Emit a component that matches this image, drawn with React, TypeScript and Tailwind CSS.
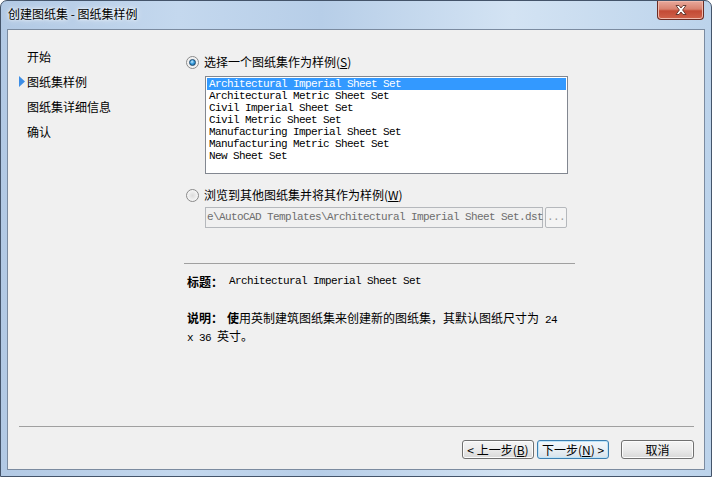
import React, { FC, ReactNode } from 'react';
import clsx from 'clsx';

const cjk = "font-['Noto_Sans_CJK_SC',sans-serif]";
const mono = "font-['Liberation_Mono','Noto_Sans_CJK_SC',monospace] text-[11px] tracking-[-0.6px]";

const sheetSets = [
  'Architectural Imperial Sheet Set',
  'Architectural Metric Sheet Set',
  'Civil Imperial Sheet Set',
  'Civil Metric Sheet Set',
  'Manufacturing Imperial Sheet Set',
  'Manufacturing Metric Sheet Set',
  'New Sheet Set',
];

const steps = ['开始', '图纸集样例', '图纸集详细信息', '确认'];

const Radio: FC<{ checked?: boolean }> = ({ checked }) => (
  <span className="flex h-[13px] w-[13px] shrink-0 items-center justify-center rounded-full border border-[#8a8a8a] bg-[radial-gradient(circle_at_50%_50%,#dcdcdc_0%,#f6f6f6_70%)]">
    {checked && (
      <span className="h-[7px] w-[7px] rounded-full border border-[#1a4a70] bg-[radial-gradient(circle_at_40%_35%,#c8ecff_0%,#3a9fe0_45%,#0d5a92_100%)]" />
    )}
  </span>
);

const Btn: FC<{ children: ReactNode; focused?: boolean; className?: string }> = ({ children, focused, className }) => (
  <div
    className={clsx(
      'flex h-[19px] items-center justify-center rounded-[3px] border text-[12px] leading-none text-black',
      focused
        ? 'border-[#3c7fb1] bg-gradient-to-b from-[#f4f8fb] via-[#eaf0f5] to-[#d6e2eb] shadow-[inset_0_0_0_1px_#bfe4f8]'
        : 'border-[#707070] bg-gradient-to-b from-[#f4f4f4] via-[#ebebeb] to-[#d8d8d8] shadow-[inset_0_0_0_1px_#fcfcfc]',
      className,
    )}
  >
    {children}
  </div>
);

const App: FC = () => {
  return (
    <div
      className={clsx(
        'flex h-[477px] w-[712px] flex-col overflow-hidden rounded-t-[7px] border border-[#44546a] bg-[linear-gradient(90deg,#b2c9e4_0%,#c4d8ee_25%,#b7cee8_45%,#d3e3f3_72%,#bcd3eb_100%)]',
        cjk,
      )}
    >
      {/* title bar */}
      <div className="flex h-[28px] shrink-0 items-start justify-between">
        <div className="pl-[7px] pt-[5px] text-[12px] leading-[16px] text-black [text-shadow:0_0_6px_#ffffff,0_0_3px_#ffffff]">
          创建图纸集 - 图纸集样例
        </div>
        <div className="mr-[7px] flex h-[19px] w-[47px] items-center justify-center rounded-b-[4px] border border-t-0 border-[#6b2c24] bg-[linear-gradient(180deg,#e9a99c_0%,#d9826f_45%,#c34a35_55%,#d0624a_100%)] shadow-[inset_0_0_0_1px_#f0b8ab]">
          <svg width="12" height="10" viewBox="0 0 12 10">
            <path
              d="M1 0.5 H4 L6 3 L8 0.5 H11 L7.6 5 L11 9.5 H8 L6 7 L4 9.5 H1 L4.4 5 Z"
              fill="#ffffff"
              stroke="#5b3129"
              strokeWidth="0.9"
              strokeLinejoin="round"
            />
          </svg>
        </div>
      </div>

      {/* client area */}
      <div className="mx-[6px] mb-[6px] flex flex-1 flex-col border border-[#7b8ba0] bg-[#f0f0f0]">
        <div className="flex flex-1">
          {/* steps */}
          <div className="w-[178px] shrink-0 pl-[11px] pt-[14px]">
            {steps.map((s, i) => (
              <div key={s} className="flex h-[25px] items-center text-[12px] text-black">
                <span className="flex w-[8px] items-center">
                  {i === 1 && (
                    <svg width="6" height="11" viewBox="0 0 6 11">
                      <path d="M0 0 L6 5.5 L0 11 Z" fill="#3d8ee6" />
                    </svg>
                  )}
                </span>
                {s}
              </div>
            ))}
          </div>

          {/* content */}
          <div className="flex w-[390px] flex-col pt-[24px]">
            <div className="flex h-[16px] items-center gap-[5px] text-[12px] text-black">
              <Radio checked />
              <span>
                选择一个图纸集作为样例(<span className="underline">S</span>)
              </span>
            </div>

            <div className="ml-[19px] mt-[6px] h-[98px] w-[363px] border border-[#828790] bg-white p-[1px]">
              {sheetSets.map((s, i) => (
                <div
                  key={s}
                  className={clsx(
                    'h-[12px] whitespace-nowrap pl-[2px] leading-[12px]',
                    mono,
                    i === 0 ? 'bg-[#3399ff] text-white' : 'text-black',
                  )}
                >
                  {s}
                </div>
              ))}
            </div>

            <div className="mt-[13px] flex h-[16px] items-center gap-[5px] text-[12px] text-black">
              <Radio />
              <span>
                浏览到其他图纸集并将其作为样例(<span className="underline">W</span>)
              </span>
            </div>

            <div className="ml-[19px] mt-[4px] flex gap-[2px]">
              <div className="flex h-[21px] w-[338px] items-center border border-[#b5b8bc] bg-[#f0f0f0] pl-[1px]">
                <span className={clsx('whitespace-nowrap text-[#6d6d6d]', mono)}>
                  e\AutoCAD Templates\Architectural Imperial Sheet Set.dst
                </span>
              </div>
              <div
                className={clsx(
                  'flex h-[21px] w-[22px] items-center justify-center rounded-[2px] border border-[#b5b8bc] bg-[#f4f4f4] text-[#9a9a9a]',
                  mono,
                )}
              >
                ...
              </div>
            </div>

            <div className="-ml-[2px] mt-[35px] h-px w-[391px] bg-[#a0a0a0]" />

            <div className="ml-[1px] mt-[10px] flex h-[15px] items-center text-[12px] text-black">
              <span className="font-bold">标题：</span>
              <span className={clsx('whitespace-pre', mono)}> Architectural Imperial Sheet Set</span>
            </div>

            <div className="ml-[1px] mt-[21px] text-[12px] leading-[15px] text-black">
              <span className="font-bold">说明：</span>
              <span className="ml-[4px] font-bold">使</span>用英制建筑图纸集来创建新的图纸集，其默认图纸尺寸为
              <span className={clsx('whitespace-pre', mono)}> 24</span>
              <br />
              <span className={clsx('whitespace-pre', mono)}>x 36 </span>英寸。
            </div>
          </div>
        </div>

        {/* footer */}
        <div className="ml-[11px] mr-[10px] h-px bg-[#a0a0a0]" />
        <div className="mb-[10px] mr-[10px] mt-[13px] flex justify-end">
          <Btn className="w-[72px]">
            &lt; 上一步(<span className="underline">B</span>)
          </Btn>
          <Btn focused className="ml-[3px] w-[72px]">
            下一步(<span className="underline">N</span>) &gt;
          </Btn>
          <Btn className="ml-[12px] w-[73px]">取消</Btn>
        </div>
      </div>
    </div>
  );
};

export default App;
